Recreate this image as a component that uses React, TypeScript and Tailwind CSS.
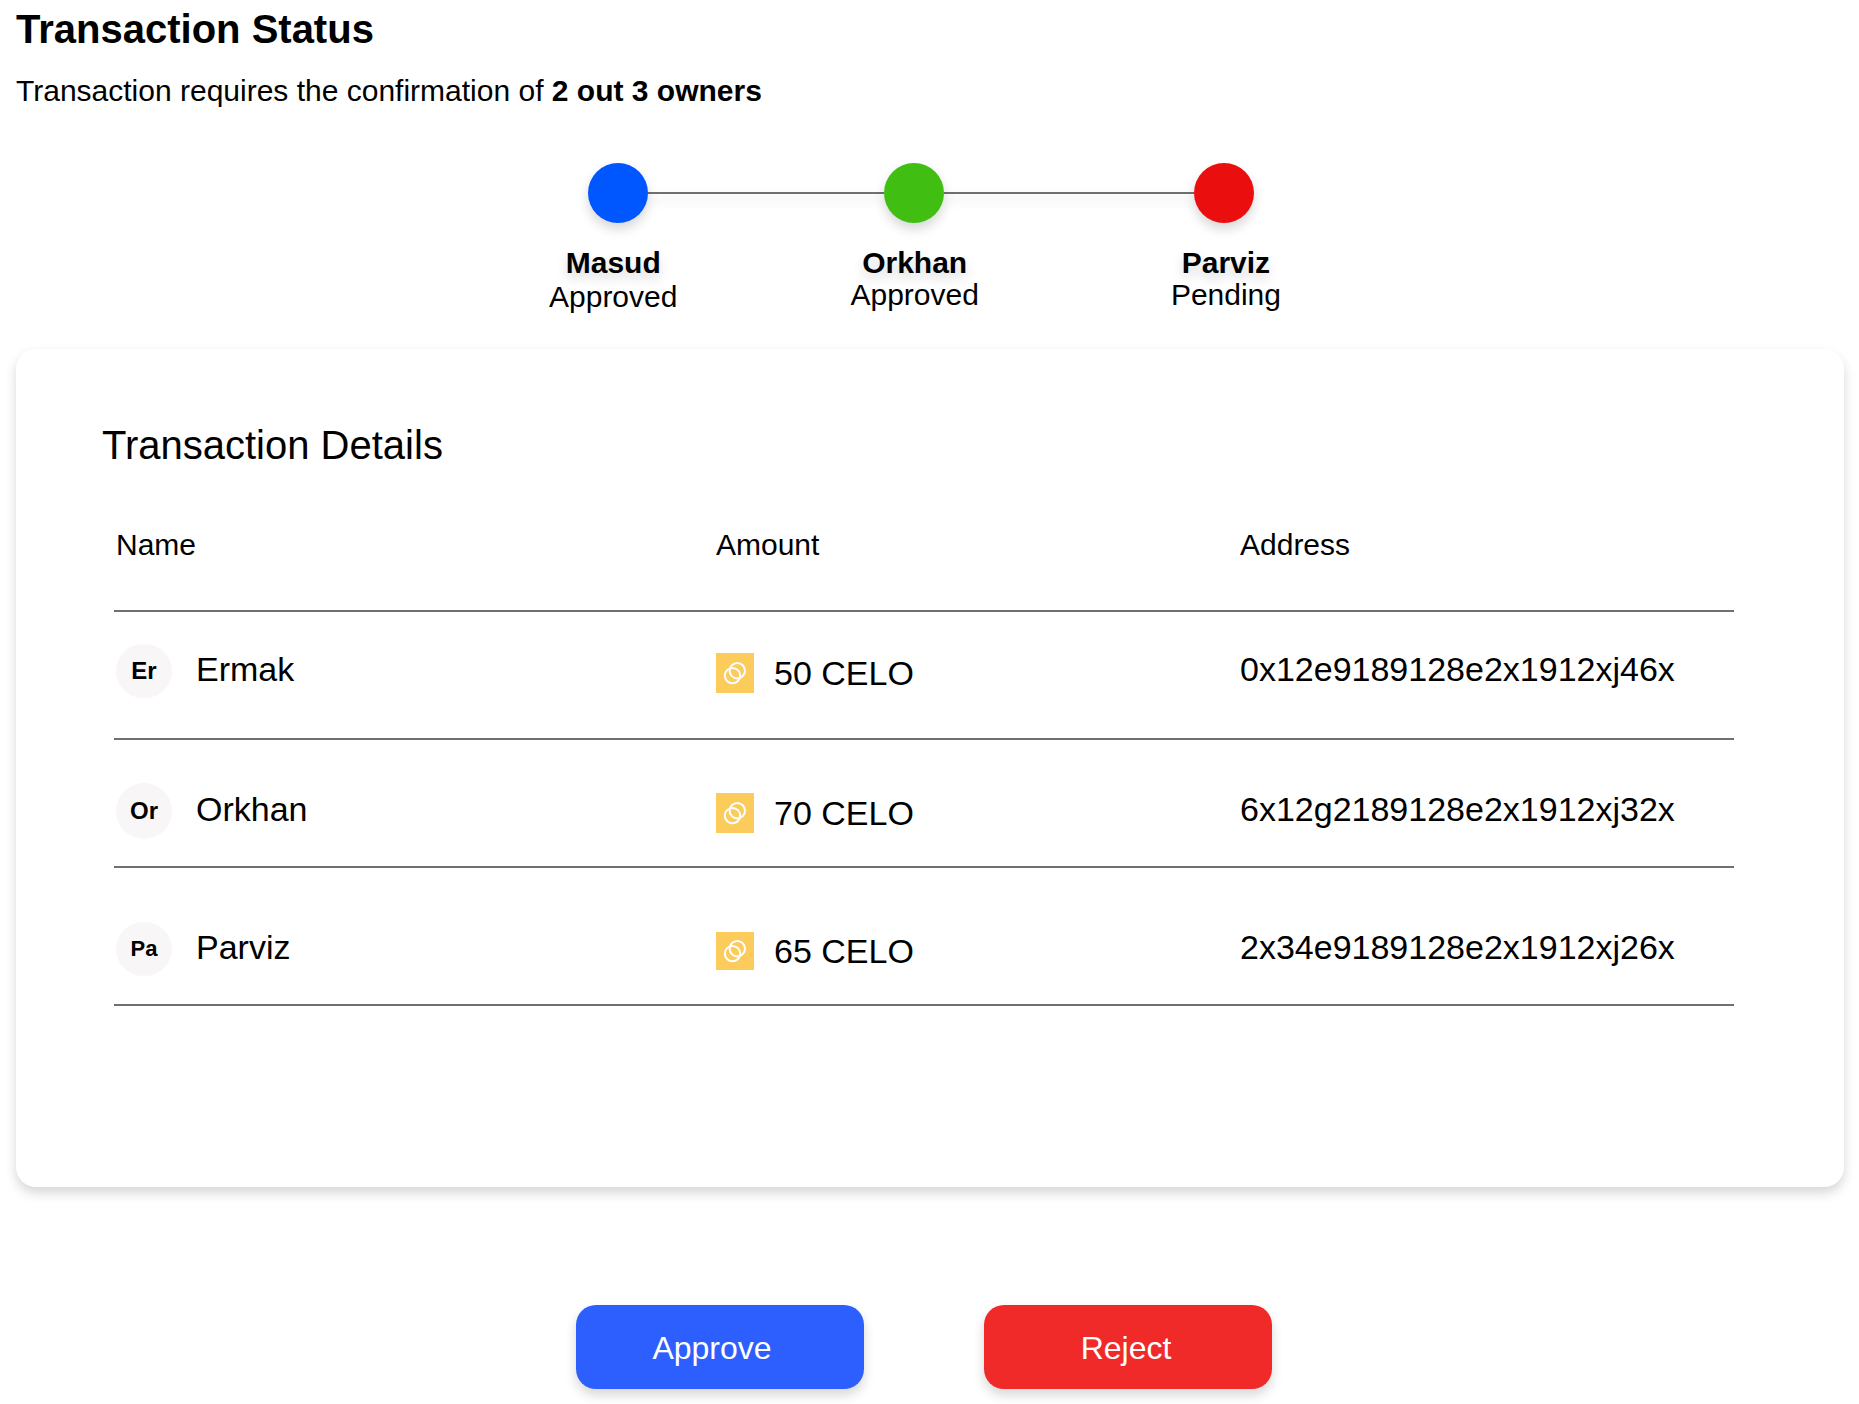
type Owner = { name: string; status: string; gap: string; statusLine: string };

const owners: Owner[] = [
  { name: "Masud", status: "Approved", gap: "mr-[173px]", statusLine: "leading-[36px]" },
  { name: "Orkhan", status: "Approved", gap: "mr-48", statusLine: "leading-8" },
  { name: "Parviz", status: "Pending", gap: "mr-0", statusLine: "leading-8" },
];

const transfers = [
  { initials: "Er", name: "Ermak", amount: "50 CELO", address: "0x12e9189128e2x1912xj46x", height: "h-32", pad: "pb-2", avatar: "h-[54px] text-[24px]", coin: "h-10" },
  { initials: "Or", name: "Orkhan", amount: "70 CELO", address: "6x12g2189128e2x1912xj32x", height: "h-32", pad: "pt-4", avatar: "h-14 text-[24px]", coin: "h-10" },
  { initials: "Pa", name: "Parviz", amount: "65 CELO", address: "2x34e9189128e2x1912xj26x", height: "h-[138px]", pad: "pt-[26px]", avatar: "h-[54px] text-[22px]", coin: "h-[38px]" },
];

const shadow = "shadow-[0_6px_12px_#00000029]";

function Coin({ height }: { height: string }) {
  return (
    <span className={"flex w-[38px] shrink-0 items-center justify-center bg-[#fbcb5c] " + height}>
      <svg width="24" height="24" viewBox="0 0 24 24" fill="none" stroke="#fff" strokeWidth="2" aria-hidden="true">
        <circle cx="14.3" cy="9.7" r="7.7" />
        <circle cx="9.5" cy="14.6" r="7.7" />
      </svg>
    </span>
  );
}

function Connector({ width }: { width: string }) {
  return <span className={"h-0.5 bg-[#707070] " + width + " " + shadow} />;
}

export default function App() {
  return (
    <main className="flex min-h-screen flex-col bg-white px-4 pt-[9px] font-['Liberation_Sans',Arial,sans-serif] text-black">
      <h1 className="text-[40px] leading-10 font-bold">Transaction Status</h1>
      <p className="mt-[27px] text-[30px] leading-[30px]">
        Transaction requires the confirmation of <b>2 out 3 owners</b>
      </p>

      <section aria-label="Confirmations" className="mt-[57px] flex flex-col items-center">
        <div className="mr-[17px] flex items-center" aria-hidden="true">
          <span className={"relative size-[60px] rounded-full bg-[#0057ff] " + shadow} />
          <Connector width="w-[236px]" />
          <span className={"relative size-[60px] rounded-full bg-[#40bf12] " + shadow} />
          <Connector width="w-[250px]" />
          <span className={"relative size-[60px] rounded-full bg-[#eb0e0e] " + shadow} />
        </div>
        <ol className="mt-6 mr-[29px] flex text-center text-[30px]">
          {owners.map((o) => (
            <li key={o.name} className={o.gap}>
              <div className="leading-8 font-bold [text-shadow:0_6px_12px_#00000029]">{o.name}</div>
              <div className={o.statusLine}>{o.status}</div>
            </li>
          ))}
        </ol>
      </section>

      <section className={"mt-[34px] mr-[-1px] rounded-[20px] bg-white pt-[76px] pr-[110px] pb-[181px] pl-[86px] " + shadow}>
        <h2 className="text-[40px] leading-10">Transaction Details</h2>
        <div className="pl-3">
          <table className="mt-[50px] w-full table-fixed border-collapse text-left">
            <colgroup>
              <col className="w-[602px]" />
              <col className="w-[524px]" />
              <col />
            </colgroup>
            <thead>
              <tr className="h-24 border-b-2 border-[#707070] align-top text-[30px] leading-[60px]">
                <th className="p-0 pl-0.5 font-normal">Name</th>
                <th className="p-0 font-normal">Amount</th>
                <th className="p-0 font-normal">Address</th>
              </tr>
            </thead>
            <tbody className="text-[34px] leading-10">
              {transfers.map((t) => (
                <tr key={t.name} className={"border-b-2 border-[#707070] " + t.height}>
                  <td className={"pl-0.5 " + t.pad}>
                    <div className="flex items-center gap-6">
                      <span className={"flex w-14 items-center justify-center rounded-full bg-[#f8f6f7] font-bold " + t.avatar}>
                        {t.initials}
                      </span>
                      <span className="pb-1">{t.name}</span>
                    </div>
                  </td>
                  <td className={t.pad}>
                    <div className="flex items-center gap-5 pt-1">
                      <Coin height={t.coin} />
                      {t.amount}
                    </div>
                  </td>
                  <td className={t.pad}>
                    <div className="pb-1">{t.address}</div>
                  </td>
                </tr>
              ))}
            </tbody>
          </table>
        </div>
      </section>

      <div className="mt-[118px] mr-[11px] flex justify-center gap-[120px] text-[32px] text-white">
        <button type="button" className={"h-[84px] w-72 rounded-[20px] bg-[#2d5fff] pt-0.5 pr-4 " + shadow}>
          Approve
        </button>
        <button type="button" className={"h-[84px] w-72 rounded-[20px] bg-[#f02929] pt-0.5 pr-1 " + shadow}>
          Reject
        </button>
      </div>
    </main>
  );
}
